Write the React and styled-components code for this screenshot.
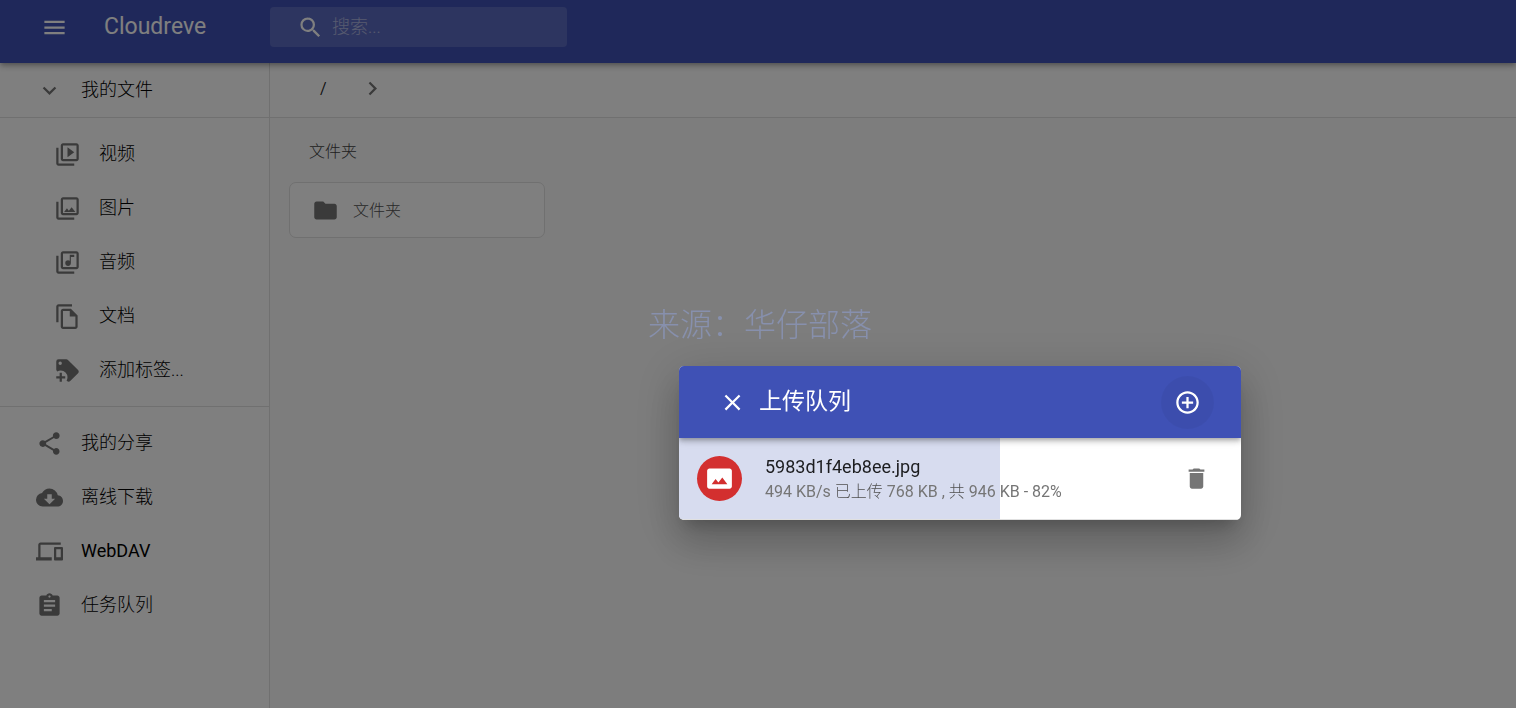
import React, { useState } from "react";
import styled, { createGlobalStyle } from "styled-components";
import {
  MdMenu,
  MdSearch,
  MdExpandMore,
  MdChevronRight,
  MdFolder,
  MdOutlineVideoLibrary,
  MdOutlinePhotoLibrary,
  MdOutlineLibraryMusic,
  MdOutlineFileCopy,
  MdShare,
  MdCloudDownload,
  MdDevices,
  MdAssignment,
  MdClose,
  MdAddCircleOutline,
  MdPhotoSizeSelectActual,
  MdDelete
} from "react-icons/md";

const GlobalStyle = createGlobalStyle`
  * {
    box-sizing: border-box;
  }
  body {
    margin: 0;
    color: rgba(0, 0, 0, 0.87);
    background-color: #fafafa;
    font-family: Roboto, "Noto Sans CJK SC", sans-serif;
    font-size: 18px;
    line-height: 27px;
  }
  button, input {
    font: inherit;
    color: inherit;
  }
`;

const Page = styled.div`
  display: flex;
  flex-direction: column;
  min-height: 100vh;
`;

const Header = styled.header`
  display: flex;
  align-items: center;
  height: 63px;
  padding: 0 27px 9px;
  color: #fff;
  background-color: #3f51b5;
  box-shadow: 0 2px 4px -1px rgba(0, 0, 0, 0.2), 0 4px 5px rgba(0, 0, 0, 0.14),
    0 1px 10px rgba(0, 0, 0, 0.12);
  z-index: 1;
`;

const IconButton = styled.button`
  display: flex;
  flex: none;
  padding: ${props => props.$pad || 0}px;
  border: 0;
  border-radius: 50%;
  color: ${props => props.$color || "inherit"};
  background-color: ${props => props.$fill || "transparent"};
  cursor: pointer;
`;

const Brand = styled.h1`
  width: 166px;
  margin: 0 0 0 22px;
  padding-bottom: 2px;
  font-size: 23px;
  font-weight: 400;
`;

const SearchBox = styled.label`
  display: flex;
  align-items: center;
  gap: 8px;
  width: 297px;
  height: 40px;
  padding: 0 27px;
  border-radius: 4px;
  background-color: rgba(255, 255, 255, 0.15);
`;

const SearchInput = styled.input`
  flex: 1;
  min-width: 0;
  padding: 0 0 2px;
  border: 0;
  outline: 0;
  background: none;
  font-weight: 300;
  &::placeholder {
    color: #fff;
    opacity: 0.5;
  }
`;

const Content = styled.div`
  display: flex;
  flex: 1;
`;

const Sidebar = styled.nav`
  flex: none;
  width: 270px;
  border-right: 1px solid #e0e0e0;
  background-color: #fff;
`;

const NavList = styled.ul`
  margin: 0;
  padding: ${props => (props.$dense ? 0 : 9)}px 0;
  border-bottom: ${props => (props.$last ? 0 : 1)}px solid #e0e0e0;
  list-style: none;
`;

const NavLink = styled.a`
  display: flex;
  align-items: center;
  gap: 18px;
  height: 54px;
  padding-left: ${props => (props.$nested ? 54 : 36)}px;
  color: #000;
  font-weight: ${props => (props.$latin ? 400 : 300)};
  text-decoration: none;
  svg {
    flex: none;
    color: #757575;
  }
`;

const NavText = styled.span`
  padding-bottom: 2px;
`;

const Main = styled.main`
  flex: 1;
  min-width: 0;
`;

const PathBar = styled.div`
  display: flex;
  align-items: center;
  gap: 32px;
  height: 55px;
  padding: 0 50px 3px;
  border-bottom: 1px solid #e0e0e0;
  background-color: #fff;
  font-size: 16px;
  svg {
    color: #757575;
  }
`;

const PathLink = styled.a`
  color: inherit;
  text-decoration: none;
`;

const Section = styled.section`
  padding: 20px 19px;
`;

const SectionTitle = styled.h2`
  margin: 0 0 17px 20px;
  color: #404040;
  font-size: 16px;
  font-weight: 300;
`;

const FolderCard = styled.button`
  display: flex;
  align-items: center;
  gap: 14px;
  width: 256px;
  height: 56px;
  padding: 0 22px;
  border: 1px solid #e0e0e0;
  border-radius: 7px;
  color: #505050;
  background-color: #fff;
  font-size: 16px;
  font-weight: 300;
  svg {
    color: #757575;
  }
`;

const Backdrop = styled.div`
  position: fixed;
  inset: 0;
  display: flex;
  align-items: flex-end;
  justify-content: flex-end;
  padding: 0 275px 188px;
  background-color: rgba(0, 0, 0, 0.5);
  z-index: 2;
`;

const Watermark = styled.div`
  position: absolute;
  top: 304px;
  left: 648px;
  color: #8790ad;
  font-size: 32px;
  font-weight: 300;
  line-height: 42px;
`;

const Dialog = styled.div`
  width: 562px;
  max-width: 100%;
  border-radius: 5px;
  overflow: hidden;
  background-color: #fff;
  box-shadow: 0 11px 15px -7px rgba(0, 0, 0, 0.2),
    0 24px 38px 3px rgba(0, 0, 0, 0.14), 0 9px 46px 8px rgba(0, 0, 0, 0.12);
`;

const DialogBar = styled.div`
  position: relative;
  display: flex;
  align-items: center;
  gap: 13px;
  height: 72px;
  padding: 0 27px 0 40px;
  color: #fff;
  background-color: #3f51b5;
  box-shadow: 0 2px 4px -1px rgba(0, 0, 0, 0.2), 0 4px 5px rgba(0, 0, 0, 0.14),
    0 1px 10px rgba(0, 0, 0, 0.12);
`;

const DialogTitle = styled.h2`
  flex: 1;
  margin: 0;
  padding-bottom: 2px;
  font-size: 23px;
  font-weight: 400;
`;

const UploadItem = styled.div`
  display: flex;
  align-items: center;
  gap: 23px;
  height: 82px;
  padding: 0 31px 0 18px;
  border-bottom: 1px solid #e0e0e0;
  background: linear-gradient(#d7dcef, #d7dcef) no-repeat;
  background-size: ${props => props.$progress}% 100%;
`;

const Avatar = styled.div`
  display: flex;
  align-items: center;
  justify-content: center;
  flex: none;
  width: 45px;
  height: 45px;
  border-radius: 50%;
  color: #fff;
  background-color: #d32f2f;
`;

const UploadText = styled.div`
  flex: 1;
  min-width: 0;
  padding-bottom: 2px;
`;

const FileName = styled.div`
  line-height: 27px;
`;

const Status = styled.div`
  color: #757575;
  font-size: 16px;
  line-height: 23px;
`;

const StatusWord = styled.span`
  color: #505050;
  font-weight: 300;
`;

const TagPlusIcon = () => (
  <svg width="27" height="27" viewBox="0 0 24 24" fill="currentColor">
    <path d="M21.41,11.58L12.41,2.58C12.04,2.21 11.53,2 11,2H4A2,2 0 0,0 2,4V11C2,11.53 2.21,12.04 2.59,12.41L3,12.81C3.9,12.27 4.94,12 6,12A6,6 0 0,1 12,18C12,19.06 11.72,20.09 11.18,21L11.58,21.4C11.95,21.78 12.47,22 13,22C13.53,22 14.04,21.79 14.41,21.41L21.41,14.41C21.79,14.04 22,13.53 22,13C22,12.47 21.79,11.96 21.41,11.58M5.5,7A1.5,1.5 0 0,1 4,5.5A1.5,1.5 0 0,1 5.5,4A1.5,1.5 0 0,1 7,5.5A1.5,1.5 0 0,1 5.5,7M10,19H7V22H5V19H2V17H5V14H7V17H10V19Z" />
  </svg>
);

const tags = [
  { title: "视频", icon: <MdOutlineVideoLibrary size={27} /> },
  { title: "图片", icon: <MdOutlinePhotoLibrary size={27} /> },
  { title: "音频", icon: <MdOutlineLibraryMusic size={27} /> },
  { title: "文档", icon: <MdOutlineFileCopy size={27} /> },
  { title: "添加标签...", icon: <TagPlusIcon /> }
];

const links = [
  { title: "我的分享", icon: <MdShare size={27} /> },
  { title: "离线下载", icon: <MdCloudDownload size={27} /> },
  { title: "WebDAV", icon: <MdDevices size={27} />, latin: true },
  { title: "任务队列", icon: <MdAssignment size={27} /> }
];

const UploadDialog = ({ onClose }) => (
  <Backdrop>
    <Watermark>来源：华仔部落</Watermark>
    <Dialog role="dialog" aria-labelledby="upload-title">
      <DialogBar>
        <IconButton aria-label="关闭" onClick={onClose}>
          <MdClose size={27} />
        </IconButton>
        <DialogTitle id="upload-title">上传队列</DialogTitle>
        <IconButton aria-label="添加" $pad={13} $fill="rgba(0, 0, 0, 0.04)">
          <MdAddCircleOutline size={27} />
        </IconButton>
      </DialogBar>
      <UploadItem $progress={57.2}>
        <Avatar>
          <MdPhotoSizeSelectActual size={27} />
        </Avatar>
        <UploadText>
          <FileName>5983d1f4eb8ee.jpg</FileName>
          <Status>
            494 KB/s <StatusWord>已上传</StatusWord> 768 KB ,{" "}
            <StatusWord>共</StatusWord> 946 KB - 82%
          </Status>
        </UploadText>
        <IconButton aria-label="删除" $color="#757575">
          <MdDelete size={27} />
        </IconButton>
      </UploadItem>
    </Dialog>
  </Backdrop>
);

const App = () => {
  const [open, setOpen] = useState(true);

  return (
    <React.Fragment>
      <GlobalStyle />
      <Page>
        <Header>
          <IconButton aria-label="菜单" $pad={14}>
            <MdMenu size={27} />
          </IconButton>
          <Brand>Cloudreve</Brand>
          <SearchBox>
            <MdSearch size={27} />
            <SearchInput placeholder="搜索..." aria-label="搜索" />
          </SearchBox>
        </Header>
        <Content>
          <Sidebar>
            <NavList $dense>
              <li>
                <NavLink href="#files">
                  <MdExpandMore size={27} />
                  <NavText>我的文件</NavText>
                </NavLink>
              </li>
            </NavList>
            <NavList>
              {tags.map(({ title, icon }) => (
                <li key={title}>
                  <NavLink href="#tag" $nested>
                    {icon}
                    <NavText>{title}</NavText>
                  </NavLink>
                </li>
              ))}
            </NavList>
            <NavList $last>
              {links.map(({ title, icon, latin }) => (
                <li key={title}>
                  <NavLink href="#page" $latin={latin}>
                    {icon}
                    <NavText>{title}</NavText>
                  </NavLink>
                </li>
              ))}
            </NavList>
          </Sidebar>
          <Main>
            <PathBar>
              <PathLink href="#root">/</PathLink>
              <MdChevronRight size={27} />
            </PathBar>
            <Section>
              <SectionTitle>文件夹</SectionTitle>
              <FolderCard>
                <MdFolder size={27} />
                文件夹
              </FolderCard>
            </Section>
          </Main>
        </Content>
      </Page>
      {open && <UploadDialog onClose={() => setOpen(false)} />}
    </React.Fragment>
  );
};

export default App;
